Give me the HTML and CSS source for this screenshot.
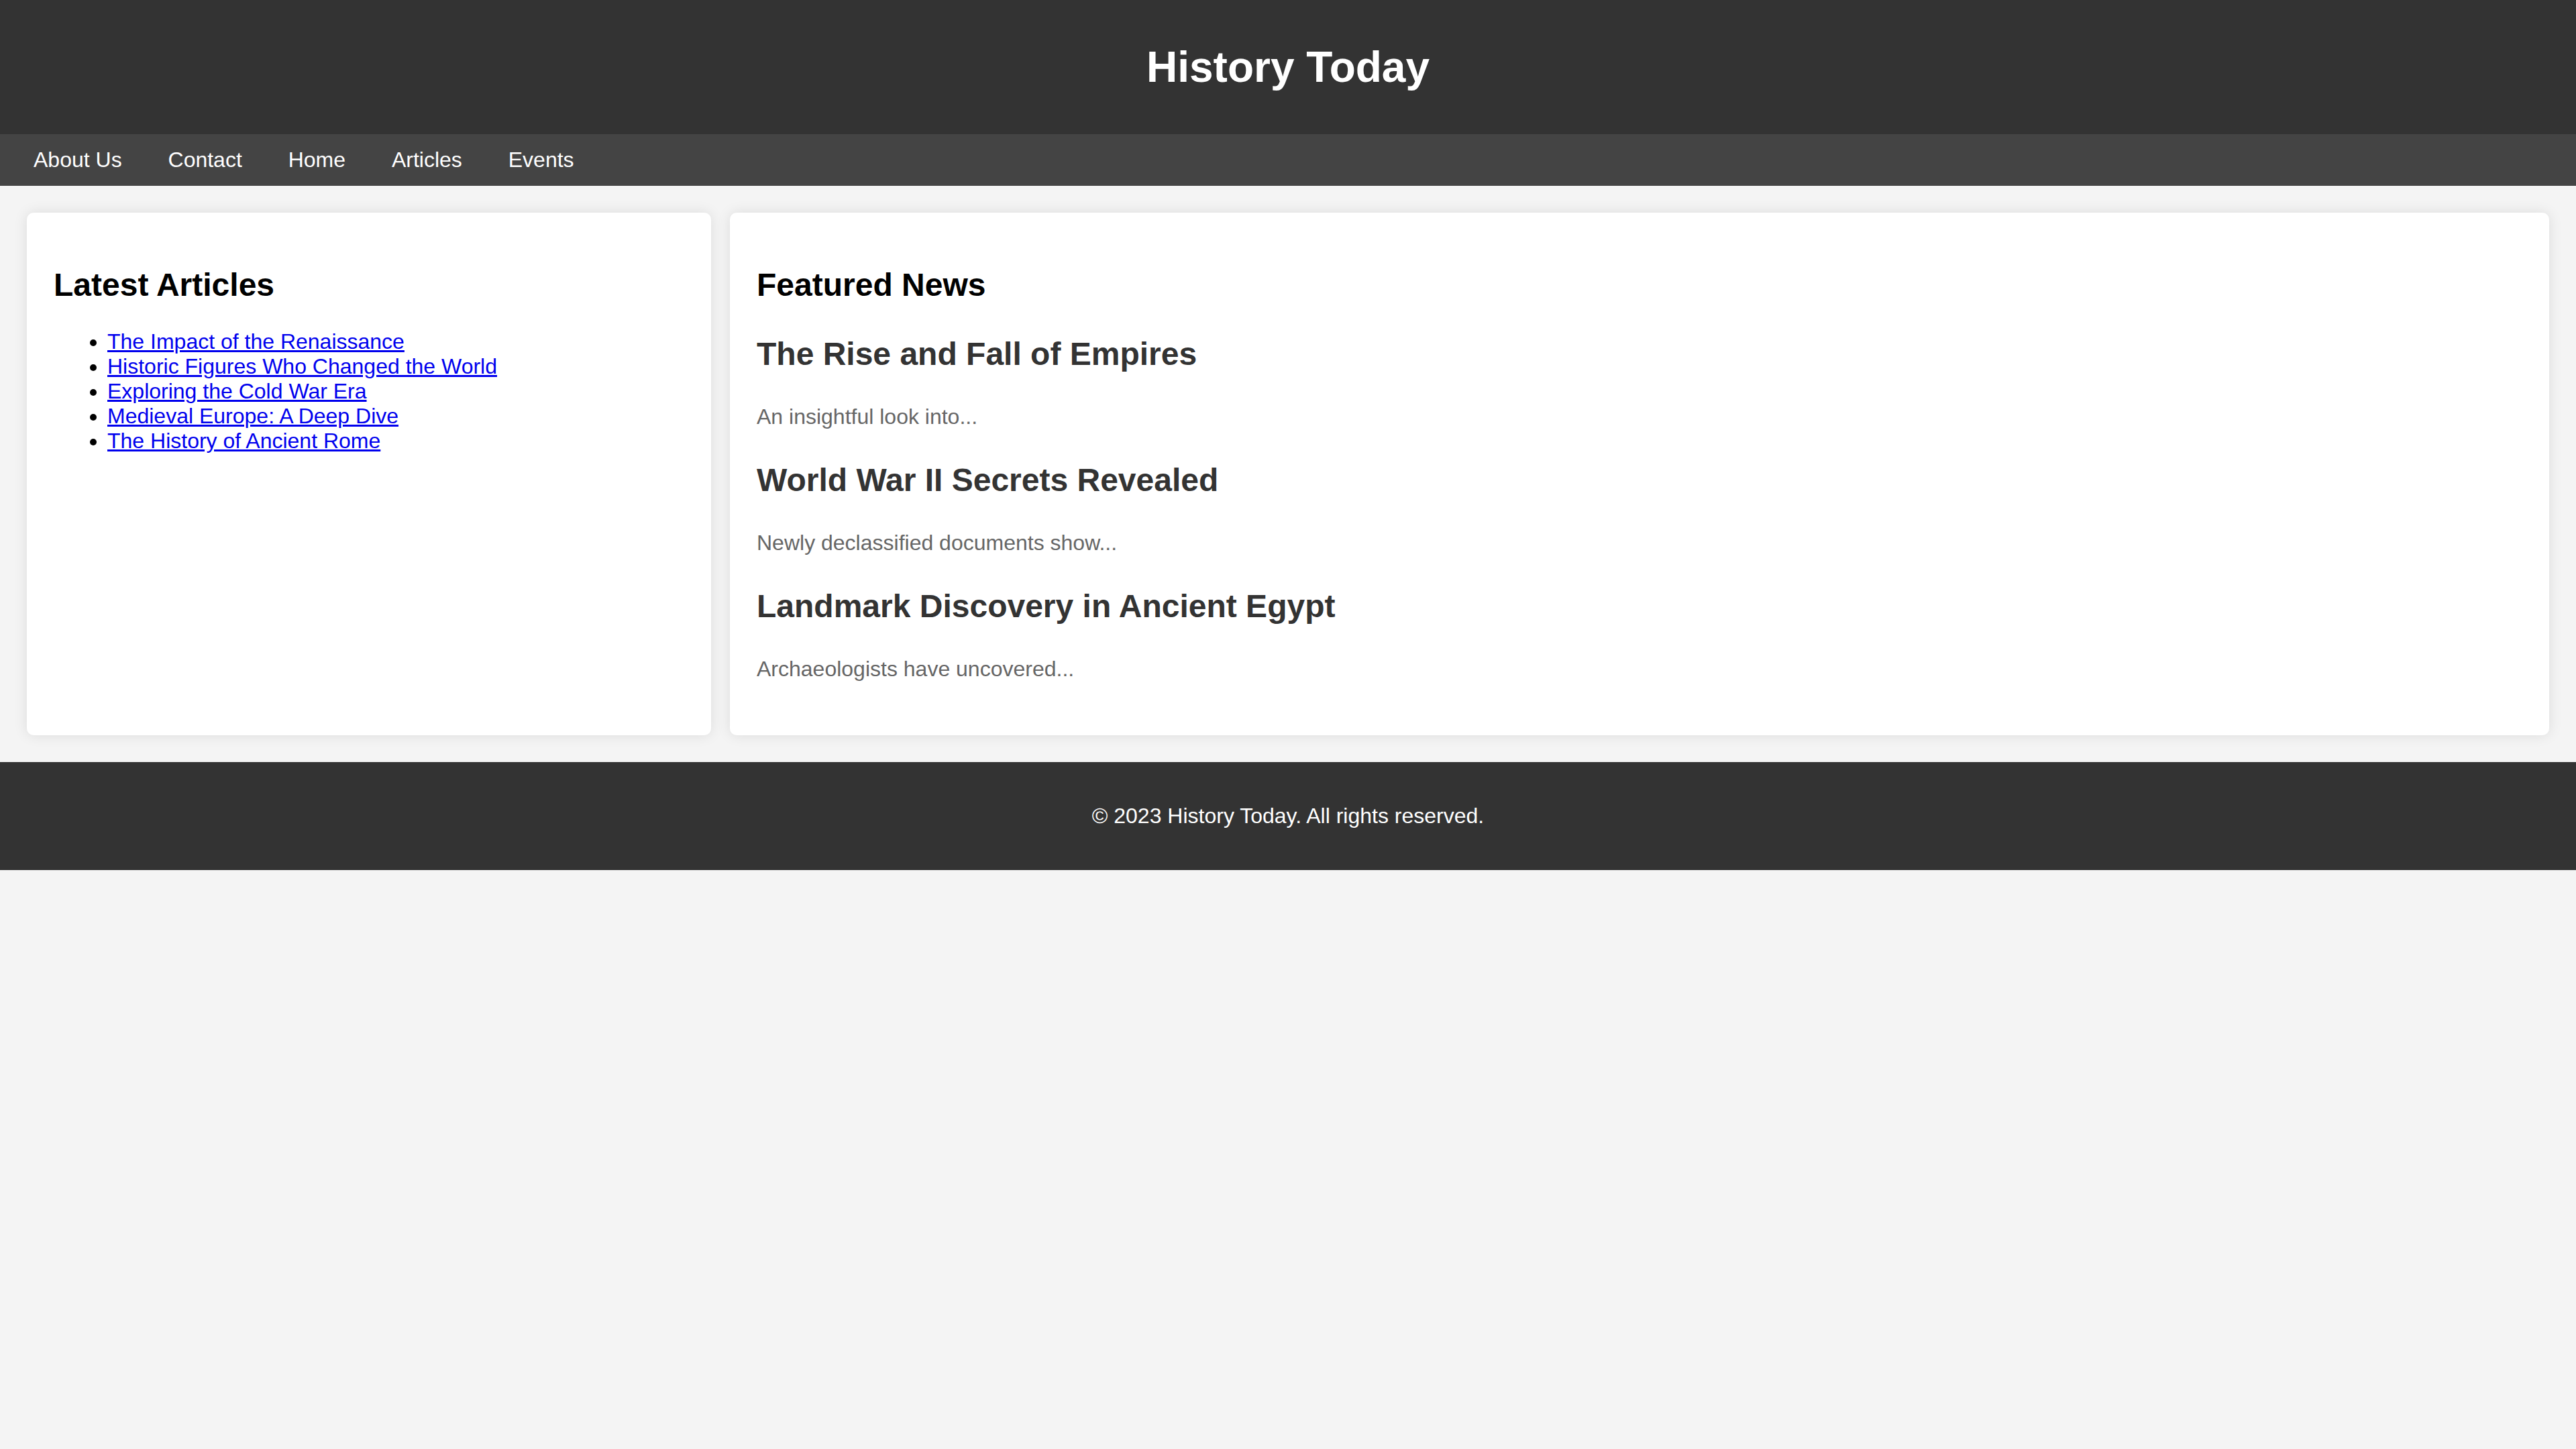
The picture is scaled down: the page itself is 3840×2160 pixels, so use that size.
FILE: index.html
```html
<!DOCTYPE html>
<html lang="en">
<head>
<meta charset="utf-8">
<title>History Today</title>
<link rel="stylesheet" href="styles.css">
</head>
<body>
<header class="site-header">
  <h1 class="site-title">History Today</h1>
</header>
<nav class="site-nav">
  <a class="nav-link" href="#">About Us</a>
  <a class="nav-link" href="#">Contact</a>
  <a class="nav-link" href="#">Home</a>
  <a class="nav-link" href="#">Articles</a>
  <a class="nav-link" href="#">Events</a>
</nav>
<main class="main">
  <aside class="card sidebar">
    <h2 class="card-title">Latest Articles</h2>
    <ul class="article-list">
      <li><a class="article-link" href="#">The Impact of the Renaissance</a></li>
      <li><a class="article-link" href="#">Historic Figures Who Changed the World</a></li>
      <li><a class="article-link" href="#">Exploring the Cold War Era</a></li>
      <li><a class="article-link" href="#">Medieval Europe: A Deep Dive</a></li>
      <li><a class="article-link" href="#">The History of Ancient Rome</a></li>
    </ul>
  </aside>
  <section class="card content">
    <h2 class="card-title">Featured News</h2>
    <article class="news-item">
      <h3 class="news-title">The Rise and Fall of Empires</h3>
      <p class="news-text">An insightful look into...</p>
    </article>
    <article class="news-item">
      <h3 class="news-title">World War II Secrets Revealed</h3>
      <p class="news-text">Newly declassified documents show...</p>
    </article>
    <article class="news-item">
      <h3 class="news-title">Landmark Discovery in Ancient Egypt</h3>
      <p class="news-text">Archaeologists have uncovered...</p>
    </article>
  </section>
</main>
<footer class="site-footer">
  <p class="footer-text">&copy; 2023 History Today. All rights reserved.</p>
</footer>
</body>
</html>
```

FILE: styles.css
```css
html, body {
  margin: 0;
  padding: 0;
}

body {
  font-family: "Liberation Sans", Arial, sans-serif;
  font-size: 32px;
  background: #f4f4f4;
  color: #000;
}

.site-header {
  background: #333;
  color: #fff;
  text-align: center;
  padding: 20px 0;
}

.site-title {
  font-size: 64px;
  font-weight: bold;
  margin: 0.67em 0;
}

.site-nav {
  background: #444;
  padding: 20px;
}

.nav-link {
  color: #fff;
  text-decoration: none;
  padding: 0 30px;
}

.main {
  display: flex;
  justify-content: space-between;
  align-items: stretch;
  padding: 40px;
}

.card {
  background: #fff;
  padding: 40px;
  border-radius: 10px;
  box-shadow: 0 0 20px rgba(0, 0, 0, 0.1);
}

.sidebar {
  width: 25%;
}

.content {
  width: 70%;
}

.card-title {
  font-size: 48px;
  font-weight: bold;
  margin: 0.83em 0;
}

.article-list {
  margin: 32px 0;
  padding-left: 80px;
}

.article-link {
  color: #0000ee;
  text-decoration: underline;
}

.news-item {
  margin-bottom: 40px;
}

.news-title {
  font-size: 48px;
  font-weight: bold;
  color: #333;
  margin: 1em 0;
}

.news-text {
  color: #666;
  margin: 1em 0;
}

.site-footer {
  background: #333;
  color: #fff;
  text-align: center;
  padding: 30px 0;
}

.footer-text {
  margin: 1em 0;
}
```
